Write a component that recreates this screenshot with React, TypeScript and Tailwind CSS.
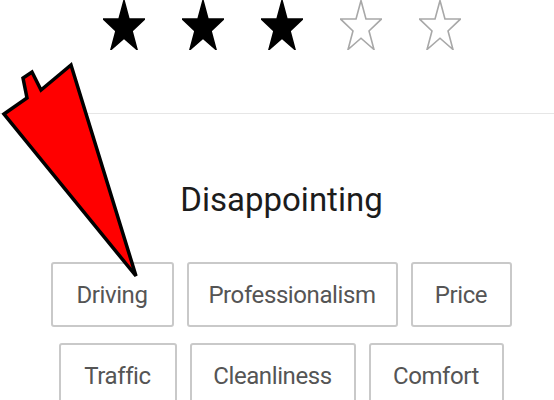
const STARS = [true, true, true, false, false];

const ROW_ONE = [
  { label: 'Driving', width: 'w-[123px]' },
  { label: 'Professionalism', width: 'w-[211px]' },
  { label: 'Price', width: 'w-[101px]' },
];
const ROW_TWO = [
  { label: 'Traffic', width: 'w-[118px]' },
  { label: 'Cleanliness', width: 'w-[166px]' },
  { label: 'Comfort', width: 'w-[135px]' },
];

function Star({ filled }: { filled: boolean }) {
  return (
    <svg width="42" height="50" viewBox="0 0 100 100" preserveAspectRatio="none" className="block">
      <polygon
        points="50,1 61.8,37.9 99,37.9 69.1,61.8 80.9,99 50,76.4 19.1,99 30.9,61.8 1,37.9 38.2,37.9"
        fill={filled ? '#000000' : '#ffffff'}
        stroke={filled ? '#000000' : '#a8a8a8'}
        strokeWidth="1.6"
        vectorEffect="non-scaling-stroke"
        strokeLinejoin="miter"
      />
    </svg>
  );
}

function Tag({ label, width }: { label: string; width: string }) {
  return (
    <div
      className={`flex h-[65px] items-center justify-center rounded-[3px] border-2 border-[#c9c9c9] text-[24px] leading-[28px] tracking-[-0.4px] text-[#555555] ${width}`}
    >
      {label}
    </div>
  );
}

export default function App() {
  return (
    <div
      className="relative h-[400px] w-[554px] overflow-hidden bg-white"
      style={{ fontFamily: 'Roboto, "Liberation Sans", sans-serif' }}
    >
      {/* Star rating */}
      <div className="flex justify-center gap-[37px] pl-[9px]">
        {STARS.map((filled, i) => (
          <Star key={i} filled={filled} />
        ))}
      </div>

      <div className="mt-[63px] h-px bg-[#e6e6e6]" />

      <div className="mt-[66px] pl-[9px] text-center text-[33px] leading-[40px] text-[#1c1c1c]">
        Disappointing
      </div>

      <div className="mt-[42px] flex flex-col items-center gap-[16px] pl-[8px]">
        <div className="flex gap-[13px]">
          {ROW_ONE.map((t) => (
            <Tag key={t.label} label={t.label} width={t.width} />
          ))}
        </div>
        <div className="flex gap-[13px]">
          {ROW_TWO.map((t) => (
            <Tag key={t.label} label={t.label} width={t.width} />
          ))}
        </div>
      </div>

      {/* Red annotation arrow */}
      <svg className="absolute left-0 top-0" width="150" height="290" viewBox="0 0 150 290">
        <polygon
          points="4,114 27,98 23,78 32,72 41,90 71,65 136,276"
          fill="#ff0000"
          stroke="#000000"
          strokeWidth="3.5"
          strokeLinejoin="miter"
        />
      </svg>
    </div>
  );
}
